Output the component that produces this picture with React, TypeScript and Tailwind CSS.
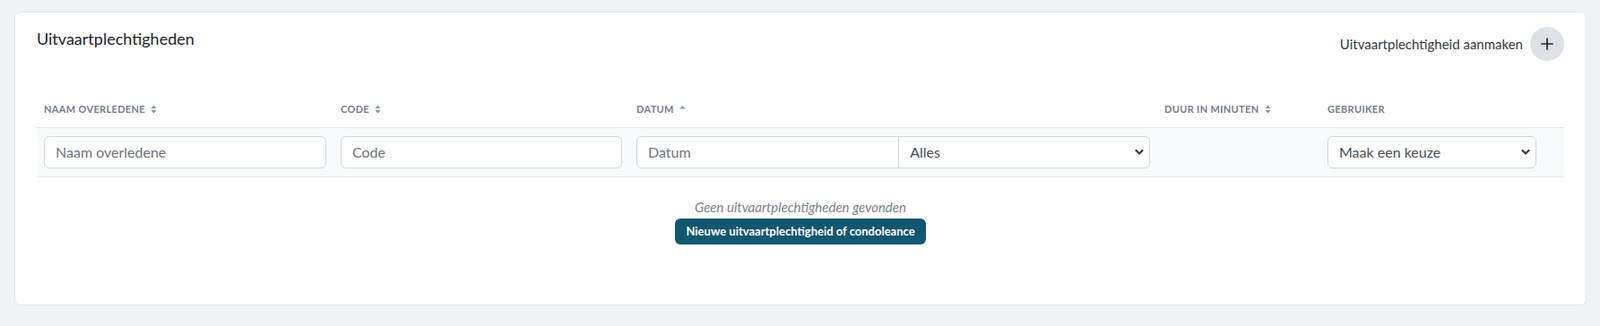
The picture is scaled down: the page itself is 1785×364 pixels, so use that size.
import React from "react";

const font = { fontFamily: "Lato, 'Liberation Sans', sans-serif" };

const SortBoth = () => (
 <svg width="7" height="10" viewBox="0 0 7 10" className="inline-block ml-[6px] -mt-[2px]">
  <path d="M3.5 0.5 L6.5 4 L0.5 4 Z" fill="#8a93a6" />
  <path d="M3.5 9.5 L6.5 6 L0.5 6 Z" fill="#8a93a6" />
 </svg>
);

const SortUp = () => (
 <svg width="7" height="10" viewBox="0 0 7 10" className="inline-block ml-[6px] -mt-[2px]">
  <path d="M3.5 1 L6.5 4.5 L0.5 4.5 Z" fill="#8a93a6" />
 </svg>
);

const Chevron = () => (
 <svg width="10" height="7" viewBox="0 0 10 7" className="absolute right-[6px] top-1/2 -translate-y-1/2 pointer-events-none">
  <path d="M1.5 1.5 L5 5 L8.5 1.5" fill="none" stroke="#343a40" strokeWidth="2.2" strokeLinecap="round" strokeLinejoin="round" />
 </svg>
);

const Th = ({ children }: { children?: React.ReactNode }) => (
 <th className="h-[40px] px-2 text-left align-middle text-[11px] font-bold uppercase tracking-[0.03em] text-[#767e8e]">
  {children}
 </th>
);

const TextInput = ({ placeholder, className = "" }: { placeholder: string; className?: string }) => (
 <input
  type="text"
  placeholder={placeholder}
  style={font}
  className={`h-9 w-full border border-[#d3d7dc] bg-white px-3 text-[16px] text-[#495057] placeholder:text-[#6c757d] outline-none ${className}`}
 />
);

const Select = ({ label, className = "" }: { label: string; className?: string }) => (
 <div className={`relative h-9 border border-[#d3d7dc] bg-white ${className}`}>
  <div className="flex h-full items-center px-3 text-[16px] text-[#495057]">{label}</div>
  <Chevron />
 </div>
);

export default function App() {
 return (
  <div style={font} className="min-h-[364px] w-full bg-[#f0f4f7] pl-4 pr-[15px] pt-[13px]">
   <div className="rounded-md border border-[#e1e5e9] bg-white px-6 pt-4 pb-[67px]">
    <div className="flex h-[38px] items-center justify-between">
     <h2 className="-mt-[11px] text-[18px] font-normal text-[#212529]">Uitvaartplechtigheden</h2>
     <div className="flex items-center gap-2">
      <span className="text-[15px] text-[#343a40]">Uitvaartplechtigheid aanmaken</span>
      <button className="flex h-[38px] w-[38px] items-center justify-center rounded-full bg-[#dee2e6]">
       <svg width="14" height="14" viewBox="0 0 14 14">
        <path d="M7 1 V13 M1 7 H13" stroke="#212529" strokeWidth="1.7" strokeLinecap="round" />
       </svg>
      </button>
     </div>
    </div>

    <table className="mt-[34px] w-full table-fixed border-collapse">
     <colgroup>
      <col className="w-[331px]" />
      <col className="w-[330px]" />
      <col className="w-[589px]" />
      <col className="w-[182px]" />
      <col className="w-[249px]" />
      <col />
     </colgroup>
     <thead>
      <tr>
       <Th>Naam overledene<SortBoth /></Th>
       <Th>Code<SortBoth /></Th>
       <Th>Datum<SortUp /></Th>
       <Th>Duur in minuten<SortBoth /></Th>
       <Th>Gebruiker</Th>
       <Th />
      </tr>
     </thead>
     <tbody>
      <tr className="border-y border-[#e3e6ea] bg-[#f9fafb]">
       <td className="px-2 py-[9px]">
        <TextInput placeholder="Naam overledene" className="rounded-md" />
       </td>
       <td className="px-2 py-[9px]">
        <TextInput placeholder="Code" className="rounded-md" />
       </td>
       <td className="px-2 py-[9px]">
        <div className="flex">
         <TextInput placeholder="Datum" className="rounded-l-md" />
         <Select label="Alles" className="-ml-px w-full rounded-r-md" />
        </div>
       </td>
       <td className="px-2 py-[9px]" />
       <td className="px-2 py-[9px]">
        <Select label="Maak een keuze" className="w-[233px] rounded-md" />
       </td>
       <td />
      </tr>
     </tbody>
    </table>

    <div className="mt-[22px] flex flex-col items-center">
     <p className="text-[15px] italic text-[#7c8289]">Geen uitvaartplechtigheden gevonden</p>
     <button className="mt-[2px] h-[29px] rounded-md bg-[#135670] px-3 text-[13px] font-bold text-white">
      Nieuwe uitvaartplechtigheid of condoleance
     </button>
    </div>
   </div>
  </div>
 );
}
